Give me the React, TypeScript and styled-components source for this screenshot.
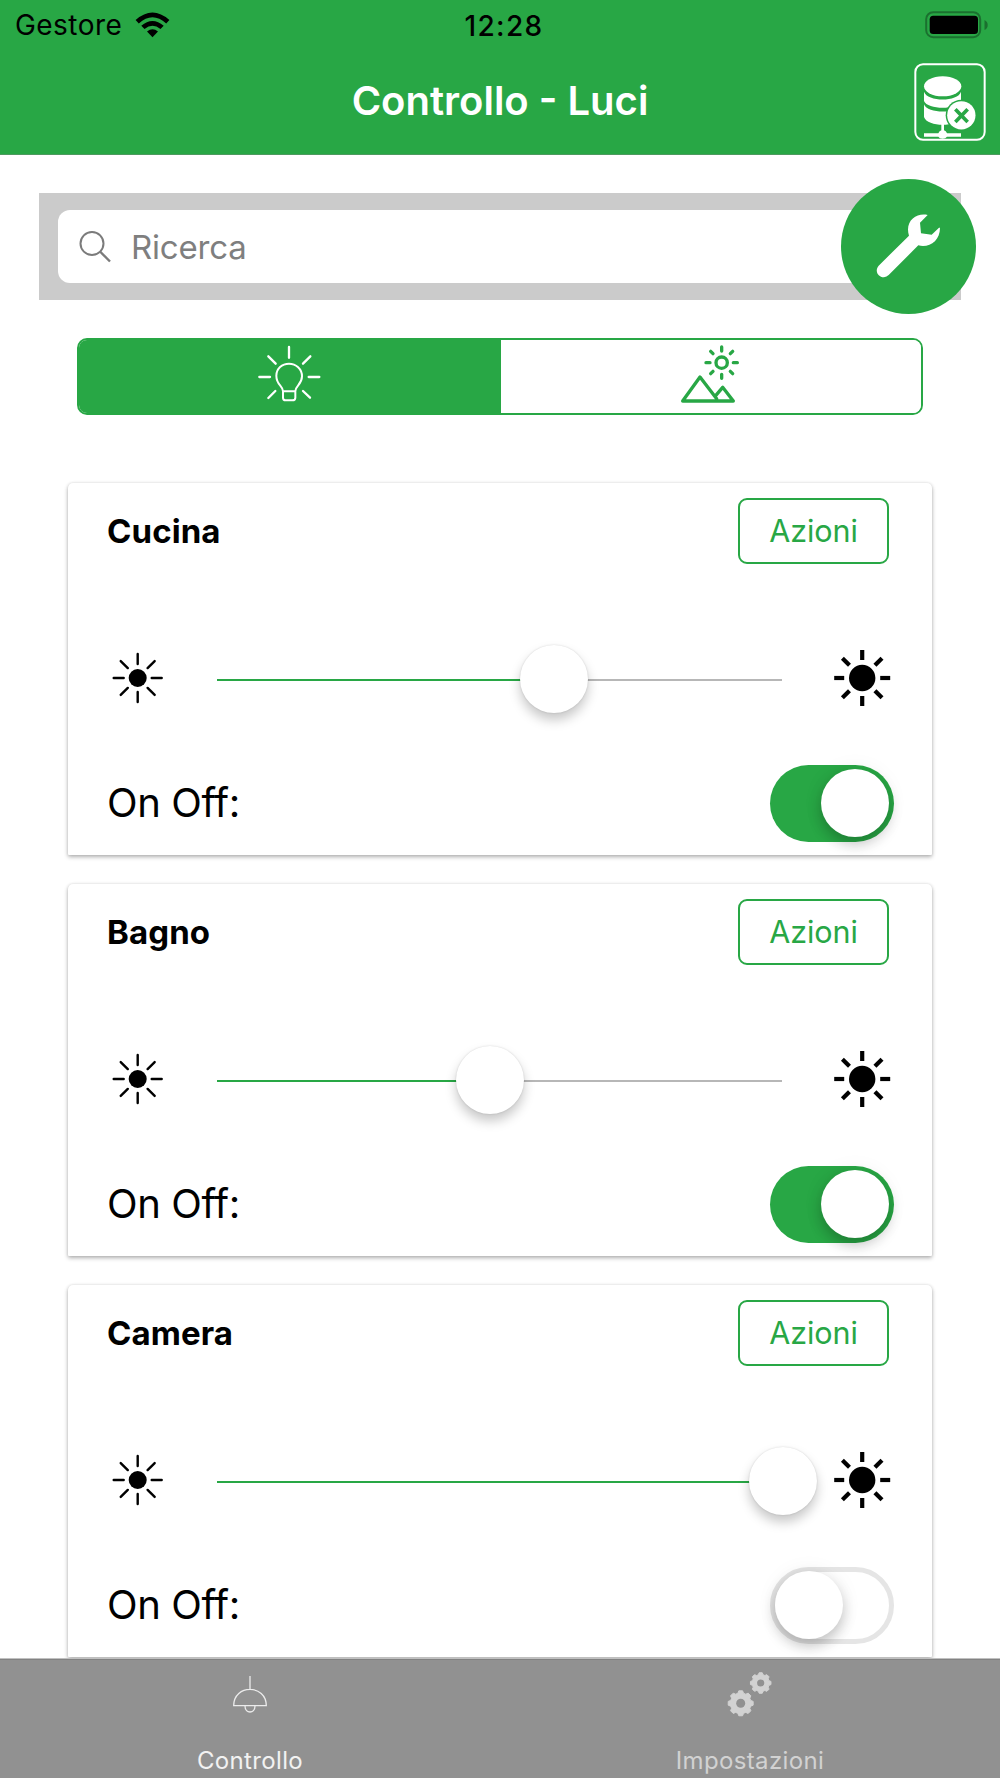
import React, { useState } from "react";
import styled, { createGlobalStyle } from "styled-components";

const green = "#28a745";

const GlobalStyle = createGlobalStyle`
  * { box-sizing: border-box; }
  body { margin: 0; background: #fff; font-family: Inter, "Liberation Sans", sans-serif; }
  button { font-family: inherit; padding: 0; margin: 0; background: none; border: 0; }
  svg { display: block; flex: none; }
`;

const Screen = styled.div`
  width: 1000px;
  height: 1778px;
  display: flex;
  flex-direction: column;
  overflow: hidden;
  background: #fff;
`;

const Header = styled.header`
  height: 155px;
  flex: none;
  background: ${green};
  border-bottom: 1px solid #4e9a60;
`;

const StatusBar = styled.div`
  display: grid;
  grid-template-columns: 1fr auto 1fr;
  align-items: center;
  height: 50px;
  padding: 0 12px 0 15px;
  color: #000;
  font-size: 28px;
  line-height: 34px;
`;

const Carrier = styled.div`
  display: flex;
  align-items: center;
  gap: 13px;
  letter-spacing: 0.45px;
`;

const Clock = styled.div`
  padding: 1px 0 0 5px;
  font-weight: 550;
  letter-spacing: 1.4px;
`;

const BatterySlot = styled.div`
  display: flex;
  justify-content: flex-end;
  padding-bottom: 1px;
`;

const TitleBar = styled.div`
  display: grid;
  grid-template-columns: 1fr auto 1fr;
  align-items: center;
  height: 103px;
  padding: 0 14px;
`;

const Title = styled.h1`
  grid-column: 2;
  margin: 0;
  padding-bottom: 2px;
  color: #fff;
  font-size: 40px;
  line-height: 50px;
  font-weight: 600;
  letter-spacing: 0;
`;

const DatabaseButton = styled.button`
  justify-self: end;
  width: 72px;
  height: 78px;
`;

const Content = styled.main`
  flex: 1;
  min-height: 0;
  overflow: hidden;
  padding: 38px 39px 0;
`;

const SearchPanel = styled.div`
  position: relative;
  height: 107px;
  padding: 17px 19px;
  background: #cbcbcb;
`;

const SearchField = styled.div`
  display: flex;
  align-items: center;
  gap: 19px;
  height: 73px;
  padding-left: 21px;
  border-radius: 12px;
  background: #fff;
  color: #7f7f7f;
  font-size: 33px;
  line-height: 40px;
  letter-spacing: -0.2px;
`;

const WrenchButton = styled.button`
  position: absolute;
  top: -14px;
  right: -14.5px;
  width: 135px;
  height: 135px;
  border-radius: 50%;
  background: ${green};
`;

const Segments = styled.div`
  display: flex;
  height: 77px;
  margin: 38px 38px 68px;
  border: 2.5px solid ${green};
  border-radius: 10px;
  overflow: hidden;
`;

const Segment = styled.button<{ $active?: boolean }>`
  flex: ${(p) => (p.$active ? "0 0 422px" : "1")};
  display: flex;
  justify-content: center;
  padding: 1px 2px 0 0;
  background: ${(p) => (p.$active ? green : "#fff")};
`;

const CardList = styled.div`
  display: flex;
  flex-direction: column;
  gap: 29px;
  padding: 0 29px;
`;

const Card = styled.section`
  height: 372px;
  flex: none;
  padding: 15px 38px 12px 39px;
  border-radius: 5px 5px 1px 1px;
  background: #fff;
  box-shadow: 0 2px 4px rgba(0, 0, 0, 0.3), 0 0 3px rgba(0, 0, 0, 0.1);
`;

const CardHead = styled.div`
  display: flex;
  justify-content: space-between;
  align-items: flex-start;
  height: 67px;
  padding-right: 5px;
`;

const CardTitle = styled.h2`
  margin: 0;
  padding-top: 13px;
  font-size: 33px;
  line-height: 40px;
  font-weight: 700;
  letter-spacing: 0.1px;
`;

const ActionButton = styled.button`
  width: 151px;
  height: 66px;
  border: 2.4px solid ${green};
  border-radius: 9px;
  color: ${green};
  font-size: 30.5px;
  line-height: 38px;
  font-weight: 400;
  letter-spacing: -0.1px;
`;

const SliderRow = styled.div`
  display: flex;
  align-items: center;
  justify-content: space-between;
  height: 68px;
  margin: 79px 0 53px;
  padding: 0 3px 0 5px;
`;

const Track = styled.div`
  position: relative;
  width: 565px;
  height: 2px;
  margin: 3px 0 0 2px;
  background: #b7b7b7;
`;

const Fill = styled.div`
  height: 100%;
  background: ${green};
`;

const Thumb = styled.div`
  position: absolute;
  top: -34px;
  width: 68px;
  height: 68px;
  margin-left: -33.5px;
  border-radius: 50%;
  background: #fff;
  box-shadow: 0 7px 12px rgba(0, 0, 0, 0.22), 0 0 2px rgba(0, 0, 0, 0.15);
`;

const SwitchRow = styled.div`
  display: flex;
  align-items: center;
  justify-content: space-between;
  height: 77px;
`;

const SwitchLabel = styled.span`
  font-size: 40px;
  line-height: 50px;
  font-variant-ligatures: none;
  font-feature-settings: "calt" 0, "liga" 0;
  letter-spacing: -0.4px;
  padding-bottom: 1px;
`;

const Toggle = styled.button<{ $on: boolean }>`
  display: flex;
  align-items: center;
  justify-content: ${(p) => (p.$on ? "flex-end" : "flex-start")};
  width: 124px;
  height: 77px;
  padding: 0 ${(p) => (p.$on ? 5 : 0)}px 1px;
  border: ${(p) => (p.$on ? "0" : "5px solid #e5e5e5")};
  border-radius: 39px;
  background: ${(p) => (p.$on ? green : "#fff")};
`;

const Knob = styled.span`
  flex: none;
  width: 68px;
  height: 68px;
  border-radius: 50%;
  background: #fff;
  box-shadow: 0 7px 14px rgba(0, 0, 0, 0.22), 0 0 22px rgba(0, 0, 0, 0.06);
`;

const TabBar = styled.nav`
  display: grid;
  grid-template-columns: 1fr 1fr;
  height: 119px;
  flex: none;
  position: relative;
  background: #919191;
  border-top: 1px solid #828282;
  box-shadow: 0 -1px 0 #c0c0c0;
`;

const Tab = styled.button<{ $active?: boolean }>`
  display: flex;
  flex-direction: column;
  align-items: center;
  gap: 28px;
  padding-top: 10px;
  color: ${(p) => (p.$active ? "#f2f2f2" : "#d2d2d2")};
  font-size: 24px;
  line-height: 30px;
  font-weight: 400;
  letter-spacing: 0.35px;
`;

function WifiIcon() {
  return (
    <svg width="35" height="27" viewBox="0 0 35 27">
      <path d="M.6 8Q17.500-7 34.400 8L31.200 11.400Q17.500-1 3.800 11.400Z" />
      <path d="M6.300 13.800Q17.500 4 28.700 13.800L25.500 17.100Q17.500 10.200 9.500 17.100Z" />
      <path d="M12 19.600Q17.500 15 23 19.600L17.500 25.300Z" />
    </svg>
  );
}

function BatteryIcon() {
  return (
    <svg width="63" height="28" viewBox="0 0 63 28">
      <rect x="1.200" y="1.200" width="54" height="25" rx="7" fill="none" stroke="#1b702f" strokeWidth="2" />
      <rect x="4.700" y="4.700" width="48.300" height="18.300" rx="3.500" />
      <path d="M59.500 9Q62.700 10.500 62.700 14Q62.700 17.500 59.500 19Z" fill="#1b702f" />
    </svg>
  );
}

function DatabaseIcon() {
  return (
    <svg width="72" height="78" viewBox="72 188 216 234" fill="#fff">
      <rect x="76" y="192" width="208" height="226" rx="23" fill="none" stroke="#fff" strokeWidth="6" />
      <ellipse cx="158" cy="258" rx="56" ry="30" />
      <path d="M102 274C112 305 204 305 213 274V302C204 329 112 329 102 302Z" />
      <path d="M102 312C112 341 204 341 213 312V350C204 381 112 381 102 350Z" />
      <path d="M154 368H162V390Q168 392 171 399H213V409H171Q167 415 158 415Q148 415 145 409H102V399H145Q148 392 154 390Z" />
      <circle cx="214" cy="345" r="47" fill={green} />
      <circle cx="214" cy="345" r="42.500" />
      <path d="M196 327L233 365M233 327L196 365" stroke={green} strokeWidth="11" />
    </svg>
  );
}

function SearchIcon() {
  return (
    <svg width="33" height="33" viewBox="0 0 33 33" fill="none" stroke="#7b7b7b" strokeWidth="2">
      <circle cx="13" cy="13.500" r="11.500" />
      <path d="M21 21.500L31 31.500" strokeWidth="2.400" />
    </svg>
  );
}

function WrenchIcon() {
  return (
    <svg width="135" height="135" viewBox="123 56 405 405" fill="#fff">
      <path d="M327 226L236 316C222 333 236 352 252 351Q260 350 266 344L355 255C388 263 420 242 420 202L417 202L395 223L363 219L360 187L383 164C351 156 313 181 327 226Z" />
    </svg>
  );
}

function BulbIcon() {
  return (
    <svg width="64" height="72" viewBox="591 47 192 216" fill="none" stroke="#fff" strokeLinecap="round" strokeWidth="6">
      <path d="M687 65V97M598 155H630M746 155H778M625 93L647 115M751 93L729 115M625 218L646 197M750 217L729 197" strokeWidth="7" />
      <path d="M669 198C669 181 649 179 649 151C649 129 666 115 687 115C708 115 726 131 726 153C726 178 706 181 706 198ZM669 198V217Q669 225 677 225H697Q706 225 706 217V198" />
    </svg>
  );
}

function LandscapeIcon() {
  return (
    <svg width="60" height="72" viewBox="120 47 180 216" fill="none" stroke={green} strokeLinecap="round" strokeLinejoin="round" strokeWidth="10">
      <circle cx="245" cy="112" r="17" />
      <path d="M245 65V77M245 147V159M198 112H210M280 112H292M212 78L219 85M278 78L271 85M212 145L219 138M278 145L271 138" />
      <path d="M128 227L180 155L230 220M128 227H280L248 186L227 211" />
    </svg>
  );
}

interface SunProps {
  core: number;
  inner: number;
  outer: number;
  stroke: number;
  round?: boolean;
}

function SunIcon({ core, inner, outer, stroke, round }: SunProps) {
  return (
    <svg width={round ? 52 : 58} height="58" viewBox={round ? "-25.700 -29 52 58" : "-29.200 -29 58 58"}>
      <circle r={core} />
      {[0, 45, 90, 135, 180, 225, 270, 315].map((angle) => (
        <line
          key={angle}
          x1={inner}
          x2={outer}
          stroke="#000"
          strokeWidth={stroke}
          strokeLinecap={round ? "round" : "butt"}
          transform={`rotate(${angle})`}
        />
      ))}
    </svg>
  );
}

function LampIcon() {
  return (
    <svg width="46" height="48" viewBox="-23 0 46 48" fill="none" stroke="#ececec" strokeWidth="1.300">
      <path d="M0 6V19.500M-16.300 35.600C-16.300 14 16.300 14 16.300 35.600ZM-5 36C-5 44 5 44 5 36" />
    </svg>
  );
}

const gearPath = (r: number) => {
  const parts: string[] = [];
  for (let i = 0; i < 8; i++) {
    [[-0.28, 0.8], [-0.15, 0.97], [0.15, 0.97], [0.28, 0.8]].forEach(([offset, scale]) => {
      const a = (i * Math.PI) / 4 + offset;
      parts.push(`${(Math.cos(a) * r * scale).toFixed(2)} ${(Math.sin(a) * r * scale).toFixed(2)}`);
    });
  }
  return `M${parts.join("L")}Z`;
};

function GearsIcon() {
  return (
    <svg width="46" height="48" viewBox="0 0 46 48" fill="#d2d2d2">
      <path d={gearPath(13)} transform="translate(13.700 33.300)" stroke="#d2d2d2" strokeLinejoin="round" />
      <path d={gearPath(10.700)} transform="translate(33.700 13)" stroke="#d2d2d2" strokeLinejoin="round" />
      <circle cx="13.700" cy="33.300" r="4.500" fill="#919191" />
      <circle cx="33.700" cy="13" r="3.600" fill="#919191" />
    </svg>
  );
}

interface Light {
  name: string;
  level: number;
  on: boolean;
}

const lights: Light[] = [
  { name: "Cucina", level: 59.6, on: true },
  { name: "Bagno", level: 48.3, on: true },
  { name: "Camera", level: 100, on: false },
];

function LightCard({ name, level, on: initial }: Light) {
  const [on, setOn] = useState(initial);
  return (
    <Card>
      <CardHead>
        <CardTitle>{name}</CardTitle>
        <ActionButton>Azioni</ActionButton>
      </CardHead>
      <SliderRow>
        <SunIcon core={9} inner={14} outer={24} stroke={2.4} round />
        <Track>
          <Fill style={{ width: `${level}%` }} />
          <Thumb style={{ left: `${level}%` }} />
        </Track>
        <SunIcon core={13.2} inner={18} outer={28} stroke={4.2} />
      </SliderRow>
      <SwitchRow>
        <SwitchLabel>On Off:</SwitchLabel>
        <Toggle $on={on} role="switch" aria-checked={on} onClick={() => setOn(!on)}>
          <Knob />
        </Toggle>
      </SwitchRow>
    </Card>
  );
}

export default function App() {
  return (
    <Screen>
      <GlobalStyle />
      <Header>
        <StatusBar>
          <Carrier>
            Gestore
            <WifiIcon />
          </Carrier>
          <Clock>12:28</Clock>
          <BatterySlot>
            <BatteryIcon />
          </BatterySlot>
        </StatusBar>
        <TitleBar>
          <Title>Controllo - Luci</Title>
          <DatabaseButton>
            <DatabaseIcon />
          </DatabaseButton>
        </TitleBar>
      </Header>
      <Content>
        <SearchPanel>
          <SearchField>
            <SearchIcon />
            Ricerca
          </SearchField>
          <WrenchButton>
            <WrenchIcon />
          </WrenchButton>
        </SearchPanel>
        <Segments>
          <Segment $active>
            <BulbIcon />
          </Segment>
          <Segment>
            <LandscapeIcon />
          </Segment>
        </Segments>
        <CardList>
          {lights.map((light) => (
            <LightCard key={light.name} {...light} />
          ))}
        </CardList>
      </Content>
      <TabBar>
        <Tab $active>
          <LampIcon />
          Controllo
        </Tab>
        <Tab>
          <GearsIcon />
          Impostazioni
        </Tab>
      </TabBar>
    </Screen>
  );
}
